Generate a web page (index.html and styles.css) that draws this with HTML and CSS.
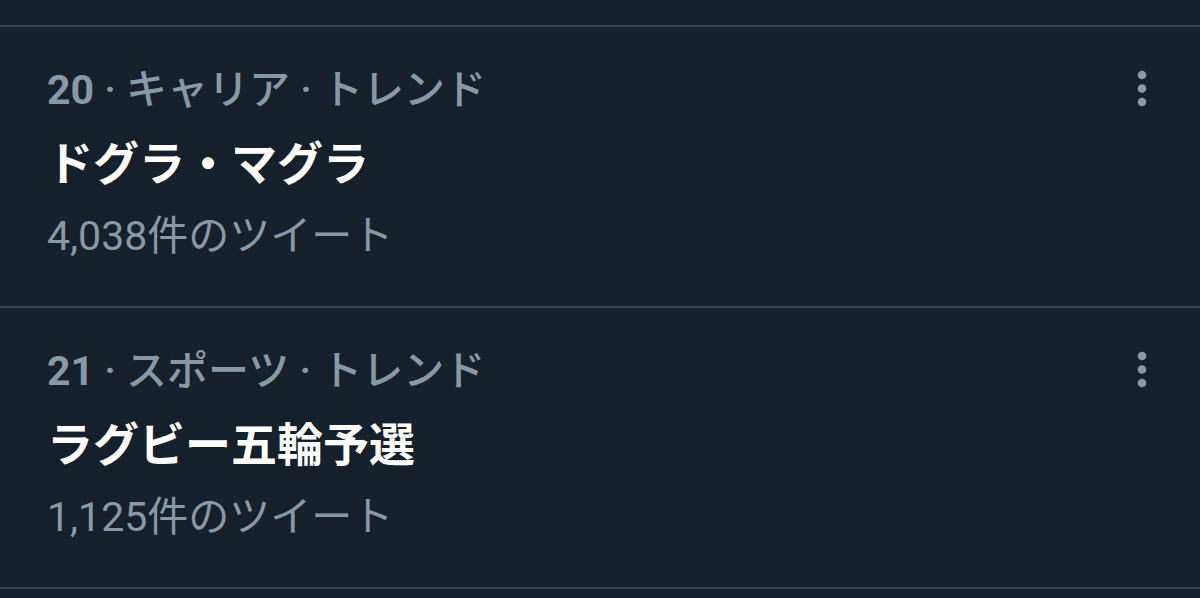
FILE: index.html
```html
<!DOCTYPE html>
<html lang="ja">
<head>
<meta charset="utf-8">
<title>トレンド</title>
<link rel="stylesheet" href="styles.css">
</head>
<body>
<div class="top-edge"></div>
<div class="trend">
  <div class="trend-body">
    <div class="trend-meta"><span class="rank">20</span> · キャリア · トレンド</div>
    <div class="trend-title">ドグラ・マグラ</div>
    <div class="trend-count">4,038件のツイート</div>
  </div>
  <svg class="more" viewBox="0 0 30 44" width="30" height="44" aria-hidden="true">
    <circle cx="15" cy="12" r="4.3"/>
    <circle cx="15" cy="25.5" r="4.3"/>
    <circle cx="15" cy="39" r="4.3"/>
  </svg>
</div>
<div class="trend">
  <div class="trend-body">
    <div class="trend-meta"><span class="rank">21</span> · スポーツ · トレンド</div>
    <div class="trend-title">ラグビー五輪予選</div>
    <div class="trend-count">1,125件のツイート</div>
  </div>
  <svg class="more" viewBox="0 0 30 44" width="30" height="44" aria-hidden="true">
    <circle cx="15" cy="12" r="4.3"/>
    <circle cx="15" cy="25.5" r="4.3"/>
    <circle cx="15" cy="39" r="4.3"/>
  </svg>
</div>
</body>
</html>
```

FILE: styles.css
```css
html, body {
  margin: 0;
  padding: 0;
  background: #15202b;
}
body {
  font-family: Roboto, "Noto Sans CJK JP", sans-serif;
  overflow: hidden;
}
.top-edge {
  height: 25px;
  border-bottom: 2px solid #38444d;
}
.trend {
  display: flex;
  align-items: flex-start;
  justify-content: space-between;
  box-sizing: border-box;
  height: 281px;
  padding: 36px 43px 0 47px;
  border-bottom: 2px solid #38444d;
}
.trend-body {
  display: flex;
  flex-direction: column;
}
.trend-meta {
  font-size: 41px;
  line-height: 54px;
  font-weight: 500;
  color: #8899a6;
  white-space: nowrap;
}
.rank {
  font-weight: 700;
}
.trend-title {
  margin-top: 14px;
  font-size: 46px;
  line-height: 66px;
  font-weight: 700;
  color: #ffffff;
  white-space: nowrap;
}
.trend-count {
  margin-top: 11px;
  font-size: 41px;
  line-height: 56px;
  color: #8899a6;
  white-space: nowrap;
}
.more {
  fill: #8b98a5;
  flex: none;
}
```
